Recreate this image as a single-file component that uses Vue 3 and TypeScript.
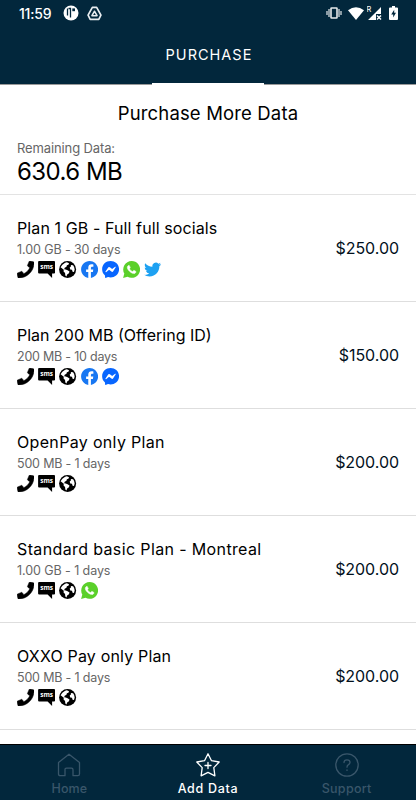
<script setup lang="ts">
type Service = 'phone' | 'sms' | 'web' | 'facebook' | 'messenger' | 'whatsapp' | 'twitter'

interface Plan {
  name: string
  detail: string
  price: string
  services: Service[]
  tracking: number
  detailTracking: number
}

const plans: Plan[] = [
  { name: 'Plan 1 GB - Full full socials', detail: '1.00 GB - 30 days', price: '$250.00', services: ['phone', 'sms', 'web', 'facebook', 'messenger', 'whatsapp', 'twitter'], tracking: 0.1, detailTracking: -0.1 },
  { name: 'Plan 200 MB (Offering ID)', detail: '200 MB - 10 days', price: '$150.00', services: ['phone', 'sms', 'web', 'facebook', 'messenger'], tracking: 0, detailTracking: -0.22 },
  { name: 'OpenPay only Plan', detail: '500 MB - 1 days', price: '$200.00', services: ['phone', 'sms', 'web'], tracking: 0.33, detailTracking: -0.18 },
  { name: 'Standard basic Plan - Montreal', detail: '1.00 GB - 1 days', price: '$200.00', services: ['phone', 'sms', 'web', 'whatsapp'], tracking: 0.37, detailTracking: -0.08 },
  { name: 'OXXO Pay only Plan', detail: '500 MB - 1 days', price: '$200.00', services: ['phone', 'sms', 'web'], tracking: 0.17, detailTracking: -0.18 },
]
</script>

<template>
  <div class="screen">
    <header class="header">
      <div class="status">
        <span class="clock">11:59</span>
        <svg class="s-app" viewBox="0 0 16 16"><circle cx="8" cy="8" r="7.5" fill="#fff" /><path d="M4.500 3.500V10.500M5.500 3.500H7.500V12.500" fill="none" stroke="#02273c" stroke-width="1.3" /><path d="M9.300 3.400h2.700v2.800H9.300z" fill="#02273c" /></svg>
        <svg class="s-drive" viewBox="0 0 14 14"><path d="M5 1.2h4L13 8.6l-2 3.8H3L1 8.6z" fill="none" stroke="#e8edf0" stroke-width="1.6" stroke-linejoin="round" /><path d="M7 4.900 9.400 9H4.600z" fill="none" stroke="#e8edf0" stroke-width="1.4" stroke-linejoin="round" /></svg>
        <span class="spacer"></span>
        <svg class="s-vibrate" viewBox="0 0 16 12"><rect x="5" y="1" width="6" height="10" rx=".5" fill="none" stroke="#e6eaec" stroke-width="1.6" /><path d="M3 2v8M13 2v8M1 4v4M15 4v4" stroke="#b9c3c8" stroke-width="1.5" /></svg>
        <svg class="s-wifi" viewBox="0 0 16 13"><path d="M0 3.2Q8-2.800 16 3.200L8 13z" fill="#fff" /></svg>
        <svg class="s-signal" viewBox="0 0 15 15"><path d="M1 14 14 1v7H9v6z" fill="#fff" /><path d="m10 9.500 4 4m0-4-4 4" stroke="#fff" stroke-width="1.500" /><text x="-.5" y="6" class="roam">R</text></svg>
        <svg class="s-battery" viewBox="0 0 9 14"><path d="M3 0h3v1.500h2q1 0 1 1V13q0 1-1 1H1q-1 0-1-1V2.500q0-1 1-1h2z" fill="#fff" /><path d="M5.200 3.800 2.200 8.400h2v3l2.800-4.600h-1.800z" fill="#02273c" /></svg>
      </div>
      <div class="tab">PURCHASE</div>
    </header>

    <main class="content">
      <section class="intro">
        <h1 class="title">Purchase More Data</h1>
        <div class="label">Remaining Data:</div>
        <div class="amount">630.6 MB</div>
      </section>

      <section v-for="plan in plans" :key="plan.name" class="plan">
        <div class="info">
          <div class="name" :style="{ letterSpacing: plan.tracking + 'px' }">{{ plan.name }}</div>
          <div class="detail" :style="{ letterSpacing: plan.detailTracking + 'px' }">{{ plan.detail }}</div>
          <div class="services">
            <template v-for="service in plan.services" :key="service">
              <svg v-if="service === 'phone'" viewBox="0 0 512 512"><path d="M493.4 24.6l-104-24c-11.3-2.6-22.9 3.3-27.5 13.9l-48 112c-4.2 9.8-1.4 21.3 6.900 28l60.6 49.6c-36 76.7-98.9 140.5-177.2 177.2l-49.6-60.6c-6.8-8.3-18.2-11.1-28-6.9l-112 48C3.9 366.5-2 378.1.6 389.4l24 104C27.1 504.2 36.7 512 48 512c256.100 0 464-207.5 464-464 0-11.2-7.7-20.9-18.6-23.4z" stroke="#000" stroke-width="14" /></svg>
              <svg v-else-if="service === 'sms'" viewBox="0 0 17 17"><path d="M1 0h15q1 0 1 1v10.500q0 1-1 1h-2V17l-4.500-4.500H1q-1 0-1-1V1q0-1 1-1z" /><text x="8.500" y="8.200" class="sms">sms</text></svg>
              <svg v-else-if="service === 'web'" viewBox="0 0 24 24"><circle cx="12" cy="12" r="12" /><path d="M8.500 2.300 11 1.900l3 1.200-.8 2.200-2.200.7-.6 2-2.500 1.500-.7 2 2.200.4 2.600 1.100 2.700 1.700-.8 2.700-2.500 1.800-1 2.800-1.600-1.400-.4-3.500-2.100-2.300.3-2.300L3.500 10 2.100 8.800Q4 4.500 8.500 2.300zM16.500 5.500l3.300.4Q22 8.700 22 12l-1 3.600-2-.5-.8-2.700-2.500-.5-.7-2.900 1.900-1.700z" fill="#fff" /></svg>
              <svg v-else-if="service === 'facebook'" viewBox="0 0 24 24"><path fill="#1877f2" d="M24 12.073c0-6.627-5.373-12-12-12s-12 5.373-12 12c0 5.990 4.388 10.954 10.125 11.854v-8.385H7.078v-3.470h3.047V9.430c0-3.007 1.792-4.669 4.533-4.669 1.312 0 2.686.235 2.686.235v2.953H15.830c-1.491 0-1.956.925-1.956 1.874v2.250h3.328l-.532 3.470h-2.796v8.385C19.612 23.027 24 18.062 24 12.073z" /></svg>
              <svg v-else-if="service === 'messenger'" viewBox="8 8 496 498"><path fill="#0866ff" d="M256.550 8C116.520 8 8 110.340 8 248.570c0 72.300 29.710 134.780 78.070 177.940 8.350 7.510 6.630 11.860 8.050 58.230A19.920 19.920 0 0 0 122 502.310c52.910-23.300 53.590-25.140 62.560-22.700C337.850 521.800 504 423.700 504 248.570 504 110.340 396.590 8 256.550 8zm149.240 185.130l-73 115.570a37.370 37.370 0 0 1-53.910 9.930l-58.080-43.470a15 15 0 0 0-18 0l-78.370 59.440c-10.460 7.930-24.160-4.600-17.110-15.670l73-115.570a37.360 37.360 0 0 1 53.910-9.930l58.060 43.460a15 15 0 0 0 18 0l78.410-59.380c10.440-7.980 24.140 4.540 17.090 15.620z" /></svg>
              <svg v-else-if="service === 'whatsapp'" viewBox="0 0 24 24"><path fill="#5bd02a" d="M12 0a11.900 11.900 0 1 1-5.700 22.300L0 24l1.700-6.200A11.900 11.900 0 0 1 12 0z" /><path fill="#fff" d="M17.472 14.382c-.297-.149-1.758-.867-2.030-.967-.273-.099-.471-.148-.670.150-.197.297-.767.966-.940 1.164-.173.199-.347.223-.644.075-.297-.150-1.255-.463-2.390-1.475-.883-.788-1.480-1.761-1.653-2.059-.173-.297-.018-.458.130-.606.134-.133.298-.347.446-.520.149-.174.198-.298.298-.497.099-.198.050-.371-.025-.520-.075-.149-.669-1.612-.916-2.207-.242-.579-.487-.500-.669-.510-.173-.008-.371-.010-.570-.010-.198 0-.520.074-.792.372-.272.297-1.040 1.016-1.040 2.479 0 1.462 1.065 2.875 1.213 3.074.149.198 2.096 3.200 5.077 4.487.709.306 1.262.489 1.694.625.712.227 1.360.195 1.871.118.571-.085 1.758-.719 2.006-1.413.248-.694.248-1.289.173-1.413-.074-.124-.272-.198-.570-.347" stroke="#fff" stroke-width=".8" /></svg>
              <svg v-else viewBox="0 0 24 24"><path fill="#1da1f2" d="M23.953 4.570a10 10 0 01-2.825.775 4.958 4.958 0 002.163-2.723c-.951.555-2.005.959-3.127 1.184a4.920 4.920 0 00-8.384 4.482C7.690 8.095 4.067 6.130 1.640 3.162a4.822 4.822 0 00-.666 2.475c0 1.710.870 3.213 2.188 4.096a4.904 4.904 0 01-2.228-.616v.060a4.923 4.923 0 003.946 4.827 4.996 4.996 0 01-2.212.085 4.936 4.936 0 004.604 3.417 9.867 9.867 0 01-6.102 2.105c-.390 0-.779-.023-1.170-.067a13.995 13.995 0 007.557 2.209c9.053 0 13.998-7.496 13.998-13.985 0-.210 0-.420-.015-.630A9.935 9.935 0 0024 4.590z" /></svg>
            </template>
          </div>
        </div>
        <div class="price">{{ plan.price }}</div>
      </section>
    </main>

    <nav class="nav">
      <div class="nav-item">
        <svg viewBox="0 0 24 24"><path d="M1.500 9.500 12 1.200l10.500 8.300v11.500q0 1.700-1.700 1.700H16v-6q0-1.500-1.500-1.500h-5Q8 15.200 8 16.700v6H3.200q-1.700 0-1.700-1.700z" /></svg>
        <span>Home</span>
      </div>
      <div class="nav-item active">
        <svg viewBox="0 0 24 24"><path d="m12 .8 3.500 6.900 7.700 1.300-5.400 5.600 1.100 8.200-6.900-3.500-6.900 3.500 1.100-8.200L.8 9l7.700-1.300zM12 9.500v6M9 12.500h6" /></svg>
        <span>Add Data</span>
      </div>
      <div class="nav-item">
        <svg viewBox="0 0 24 24"><circle cx="12" cy="12" r="11.200" /><path d="M9 9.500Q9 6.800 12 6.800t3 2.500q0 1.500-1.500 2.300T12 14.200M12 16.800v.6" /></svg>
        <span class="support">Support</span>
      </div>
    </nav>
  </div>
</template>

<style>
body {
  background: #fff;
}
</style>

<style scoped>
.screen {
  width: 416px;
  height: 800px;
  display: flex;
  flex-direction: column;
  overflow: hidden;
  background: #fff;
  color: #000;
  font-family: Inter, 'Liberation Sans', sans-serif;
  font-weight: 370;
  white-space: nowrap;
}
.header {
  flex: none;
  height: 84px;
  display: flex;
  flex-direction: column;
  justify-content: space-between;
  align-items: center;
  background: #02273c;
  color: #fff;
  border-bottom: 1px solid #999;
  box-sizing: content-box;
}
.status {
  align-self: stretch;
  height: 26px;
  padding: 0 18px 0 19px;
  display: flex;
  align-items: center;
}
.status svg {
  display: block;
  flex: none;
}
.clock {
  width: 44px;
  font-size: 14px;
  font-weight: 500;
  letter-spacing: -0.2px;
}
.s-app { width: 16px; height: 16px; }
.s-drive { width: 15px; height: 15px; margin-left: 8px; }
.spacer { flex: 1; }
.s-vibrate { width: 16px; height: 12px; }
.s-wifi { width: 16px; height: 13px; margin-left: 6px; }
.s-signal { width: 15px; height: 15px; margin-left: 3px; }
.s-battery { width: 9px; height: 14px; margin-left: 7px; }
.roam {
  font-size: 7.500px;
  fill: #fff;
}
.tab {
  width: 112px;
  height: 55px;
  box-sizing: border-box;
  border-bottom: 2px solid #fff;
  margin-bottom: -1px;
  padding-left: 2px;
  line-height: 50px;
  text-align: center;
  font-size: 14.500px;
  font-weight: 400;
  letter-spacing: 1px;
}
.content {
  flex: 1;
  min-height: 0;
  overflow: hidden;
}
.intro {
  height: 110px;
  box-sizing: border-box;
  padding: 15px 17px 0;
  border-bottom: 1px solid #e3e3e3;
}
.title {
  margin: 0;
  text-align: center;
  font-size: 18.500px;
  line-height: 26px;
  font-weight: inherit;
  letter-spacing: 0.15px;
}
.label {
  margin-top: 13px;
  font-size: 13px;
  line-height: 18px;
  letter-spacing: -0.12px;
  color: #666;
}
.amount {
  font-size: 24px;
  line-height: 29px;
  letter-spacing: -0.55px;
}
.plan {
  height: 107px;
  box-sizing: border-box;
  padding: 22px 17px 0;
  border-bottom: 1px solid #dedede;
  display: flex;
  justify-content: space-between;
}
.name {
  font-size: 16px;
  line-height: 22px;
}
.detail {
  margin-top: 1px;
  font-size: 12.500px;
  line-height: 19px;
  color: #666;
}
.services {
  display: flex;
  gap: 4px;
  margin-top: 2px;
}
.services svg {
  width: 17.200px;
  height: 17px;
}
.sms {
  font: 700 6.500px 'Open Sans', sans-serif;
  text-anchor: middle;
  fill: #fff;
}
.price {
  margin-top: 20px;
  font-size: 16px;
  line-height: 23px;
  letter-spacing: -0.05px;
  color: #02101c;
}
.nav {
  flex: none;
  height: 56px;
  box-sizing: border-box;
  border-top: 1px solid #000;
  background: #02273c;
  display: grid;
  grid-template-columns: repeat(3, 1fr);
}
.nav-item {
  display: flex;
  flex-direction: column;
  align-items: center;
  padding-top: 8px;
  color: #39566a;
  font-size: 12.500px;
  line-height: 18px;
  font-weight: 500;
  letter-spacing: 0.1px;
}
.nav-item svg {
  width: 24px;
  height: 24px;
  margin-bottom: 3px;
  fill: none;
  stroke: currentColor;
  stroke-width: 1.300;
  stroke-linejoin: round;
  stroke-linecap: round;
}
.support {
  letter-spacing: 0.3px;
}
.active {
  color: #fff;
  letter-spacing: 0.7px;
}
</style>
